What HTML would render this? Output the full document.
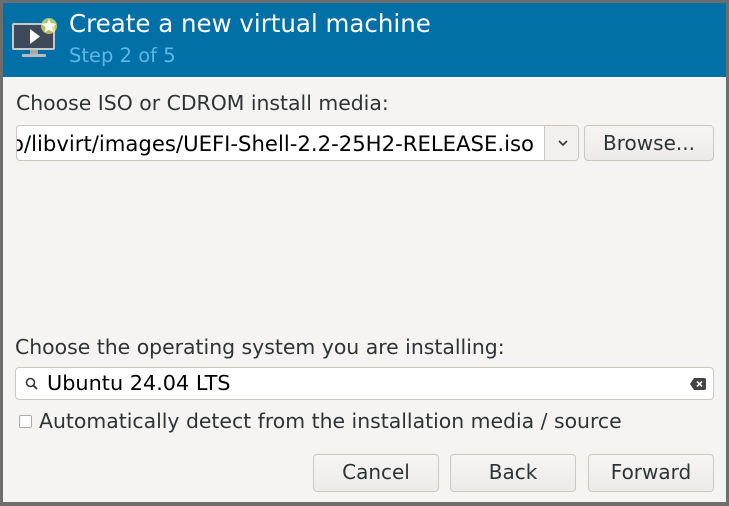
<!DOCTYPE html>
<html><head><style>
html,body{margin:0;padding:0}
body{width:729px;height:506px;background:#6d6d6d;position:relative;overflow:hidden;font-family:"DejaVu Sans","Liberation Sans",sans-serif}
.win{position:absolute;left:3px;top:3px;width:723px;height:499px;background:#f5f4f2}
.hdr{position:absolute;left:0;top:0;width:723px;height:74px;background:#0070a6}
.t{position:absolute;left:66px;top:6px;font-size:24.5px;color:#fff;white-space:nowrap}
.s{position:absolute;left:66px;top:41px;font-size:19.5px;color:#5cb8e6}
.lbl{position:absolute;font-size:20.4px;color:#2e3436;white-space:nowrap}
.entry{position:absolute;background:#fff;border:1px solid #cdc7c2;border-radius:4px;box-sizing:border-box}
.btn{position:absolute;background:linear-gradient(#f6f5f4,#edebe9);border:1px solid #cdc7c2;border-radius:4px;box-sizing:border-box;font-size:20px;color:#2e3436;text-align:center;line-height:35px}
</style></head><body>
<div class="win">
<div class="hdr">
<svg style="position:absolute;left:6px;top:10px" width="52" height="50">
<rect x="3" y="10" width="43" height="27" rx="2" fill="#c8c8c8"/>
<rect x="5" y="12" width="39" height="23" fill="#3d4a5a"/>
<path d="M21 16 L31 23.5 L21 31Z" fill="#fff"/>
<rect x="21" y="37" width="8" height="4" fill="#aaa"/>
<rect x="13" y="41" width="24" height="3" rx="1" fill="#bbb"/>
<circle cx="40" cy="13" r="8" fill="#f0f060" opacity=".7"/>
<path d="M40 6 l2 4.5 5 .5 -3.8 3.3 1.2 5 -4.4-2.6 -4.4 2.6 1.2-5 -3.8-3.3 5-.5z" fill="#fff"/>
</svg>
<div class="t">Create a new virtual machine</div>
<div class="s">Step 2 of 5</div>
</div>
<div class="lbl" style="left:13px;top:88px">Choose ISO or CDROM install media:</div>
<div class="entry" style="left:13px;top:122px;width:563px;height:36px;overflow:hidden">
<div style="position:absolute;left:0;top:5px;font-size:21.2px;color:#000;white-space:nowrap;margin-left:-6px">o/libvirt/images/UEFI-Shell-2.2-25H2-RELEASE.iso</div>
<div style="position:absolute;left:527px;top:0;width:35px;height:34px;border-left:1px solid #cdc7c2;background:#f1f0ee"><svg style="position:absolute;left:13px;top:14px" width="10" height="7"><path d="M1 1 L5 5 L9 1" fill="none" stroke="#333" stroke-width="1.6"/></svg></div>
</div>
<div class="btn" style="left:581px;top:122px;width:130px;height:36px">Browse...</div>
<div class="lbl" style="left:12px;top:332px">Choose the operating system you are installing:</div>
<div class="entry" style="left:12px;top:364px;width:699px;height:33px">
<svg style="position:absolute;left:9px;top:9px" width="14" height="14"><circle cx="5.5" cy="5.5" r="4" fill="none" stroke="#333" stroke-width="1.5"/><path d="M8.5 8.5 L12 12" stroke="#333" stroke-width="1.8"/></svg>
<div style="position:absolute;left:31px;top:3px;font-size:20.8px;color:#000">Ubuntu 24.04 LTS</div>
<svg style="position:absolute;left:674px;top:10px" width="16" height="12"><path d="M4 0 H14 a2 2 0 0 1 2 2 V10 a2 2 0 0 1-2 2 H4 L0 6Z" fill="#444"/><path d="M7 3.5 l5 5 M12 3.5 l-5 5" stroke="#fff" stroke-width="1.5"/></svg>
</div>
<div style="position:absolute;left:16px;top:412px;width:13px;height:13px;border:1px solid #b0aaa5;border-radius:2px;background:#fff;box-sizing:border-box"></div>
<div class="lbl" style="left:36px;top:406px">Automatically detect from the installation media / source</div>
<div class="btn" style="left:310px;top:451px;width:126px;height:38px">Cancel</div>
<div class="btn" style="left:447px;top:451px;width:126px;height:38px">Back</div>
<div class="btn" style="left:585px;top:451px;width:126px;height:38px">Forward</div>
</div>
</body></html>
